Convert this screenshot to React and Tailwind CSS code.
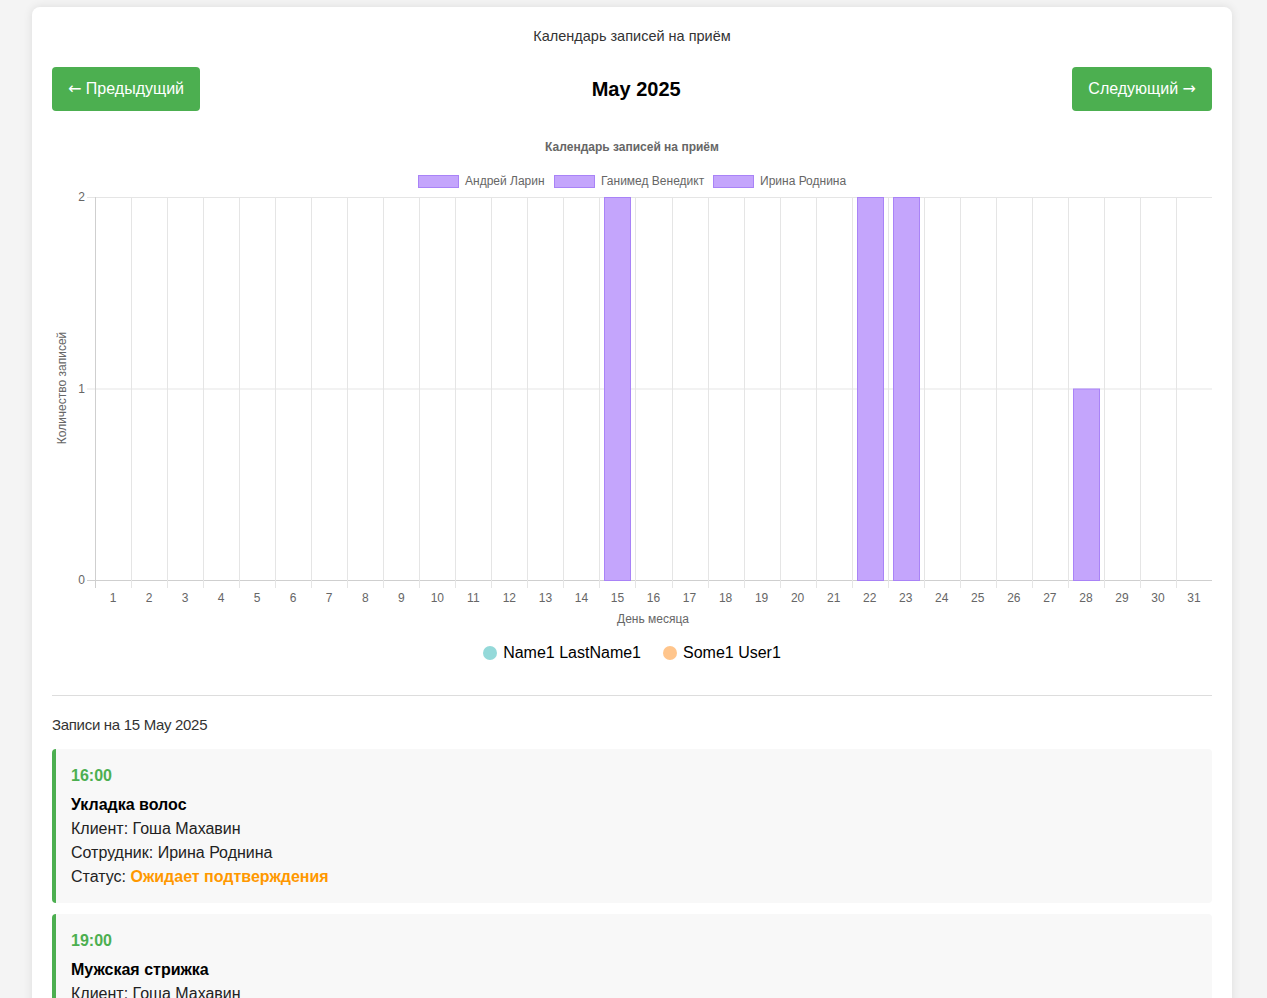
import React from 'react';

const days = Array.from({ length: 31 }, (_, i) => i + 1);
const counts = { 15: 2, 22: 2, 23: 2, 28: 1 };

const appointments = [
  { time: '16:00', service: 'Укладка волос', client: 'Гоша Махавин', staff: 'Ирина Роднина', status: 'Ожидает подтверждения' },
  { time: '19:00', service: 'Мужская стрижка', client: 'Гоша Махавин', staff: 'Андрей Ларин', status: 'Ожидает подтверждения' },
];

function BookingChart() {
  // plot box inside the svg
  const left = 43;
  const right = 1160;
  const top = 67;
  const bottom = 450;
  const step = (right - left) / 31;
  const yFor = (v) => bottom - ((bottom - top) * v) / 2;

  return (
    <svg width="1160" height="505" viewBox="0 0 1160 505" className="block" style={{ fontFamily: '"Liberation Sans", Arial, sans-serif' }}>
      <text x="580" y="21" textAnchor="middle" fontSize="12" fontWeight="bold" fill="#666">
        Календарь записей на приём
      </text>

      {[
        { x: 366, label: 'Андрей Ларин' },
        { x: 502, label: 'Ганимед Венедикт' },
        { x: 661, label: 'Ирина Роднина' },
      ].map((l) => (
        <g key={l.label}>
          <rect x={l.x + 0.5} y="45.5" width="40" height="12" fill="#c4a5fc" stroke="#a983f7" />
          <text x={l.x + 47} y="55" fontSize="12" fill="#666">
            {l.label}
          </text>
        </g>
      ))}

      {/* horizontal grid */}
      {[0, 1, 2].map((v) => (
        <g key={v}>
          <line x1={left - 8} x2={right} y1={yFor(v) + 0.5} y2={yFor(v) + 0.5} stroke={v === 0 ? '#cfcfcf' : '#e5e5e5'} />
          <text x={left - 10} y={yFor(v) + 4} textAnchor="end" fontSize="12" fill="#666">
            {v}
          </text>
        </g>
      ))}

      {/* vertical grid */}
      {days.map((d, i) => (
        <line
          key={d}
          x1={Math.round(left + i * step) + 0.5}
          x2={Math.round(left + i * step) + 0.5}
          y1={top}
          y2={bottom + 8}
          stroke={i === 0 ? '#cfcfcf' : '#e5e5e5'}
        />
      ))}

      {days.map((d, i) => {
        const v = counts[d];
        const cx = left + (i + 0.5) * step;
        return (
          <g key={d}>
            {v ? (
              <rect x={Math.round(cx - 13) + 0.5} y={yFor(v) + 0.5} width="26" height={bottom - yFor(v)} fill="#c4a5fc" stroke="#a983f7" />
            ) : null}
            <text x={cx} y="472" textAnchor="middle" fontSize="12" fill="#666">
              {d}
            </text>
          </g>
        );
      })}

      <text x="601" y="493" textAnchor="middle" fontSize="12" fill="#666">
        День месяца
      </text>
      <text transform="translate(14 258) rotate(-90)" textAnchor="middle" fontSize="12" fill="#666">
        Количество записей
      </text>
    </svg>
  );
}

export default function App() {
  return (
    <div className="min-h-screen bg-[#f4f4f4] pt-[7px] pb-10 font-['Liberation_Sans',Arial,sans-serif] text-[#222]">
      <div className="ml-[32px] w-[1200px] rounded-lg bg-white px-5 pt-5 pb-5 shadow-[0_0_10px_rgba(0,0,0,0.1)]">
        <h2 className="text-center text-[14.5px] leading-[18px] text-[#333]">Календарь записей на приём</h2>

        <div className="mt-[22px] flex items-center justify-between">
          <button className="h-[44px] rounded bg-[#4caf50] px-[16px] text-[16px] text-white">
            <span className="font-['DejaVu_Sans',sans-serif]">←</span> Предыдущий
          </button>
          <h3 className="text-[20px] font-bold text-black">May 2025</h3>
          <button className="h-[44px] rounded bg-[#4caf50] px-[16px] text-[16px] text-white">
            Следующий <span className="font-['DejaVu_Sans',sans-serif]">→</span>
          </button>
        </div>

        <div className="mt-[19px]">
          <BookingChart />
        </div>

        <div className="mt-[6px] flex items-center justify-center gap-[22px] text-[16px] text-black">
          <div className="flex items-center gap-[6px]">
            <span className="h-[14px] w-[14px] rounded-full bg-[#94d9d9]" />
            <span>Name1 LastName1</span>
          </div>
          <div className="flex items-center gap-[6px]">
            <span className="h-[14px] w-[14px] rounded-full bg-[#ffc58c]" />
            <span>Some1 User1</span>
          </div>
        </div>

        <div className="mt-[30px] border-t border-[#ddd] pt-[19px]">
          <h3 className="text-[15px] leading-[20px] tracking-[-0.3px] text-[#333]">Записи на 15 May 2025</h3>

          <div className="mt-[14px] flex flex-col gap-[11px]">
            {appointments.map((a) => (
              <div key={a.time} className="rounded border-l-4 border-[#4caf50] bg-[#f8f8f8] px-[15px] pt-[15px] pb-[14px] text-[16px] leading-[24px]">
                <div className="font-bold text-[#4caf50]">{a.time}</div>
                <div className="mt-[5px] font-bold text-black">{a.service}</div>
                <div>Клиент: {a.client}</div>
                <div>Сотрудник: {a.staff}</div>
                <div>
                  Статус: <span className="font-bold text-[#ff9800]">{a.status}</span>
                </div>
              </div>
            ))}
          </div>
        </div>
      </div>
    </div>
  );
}
